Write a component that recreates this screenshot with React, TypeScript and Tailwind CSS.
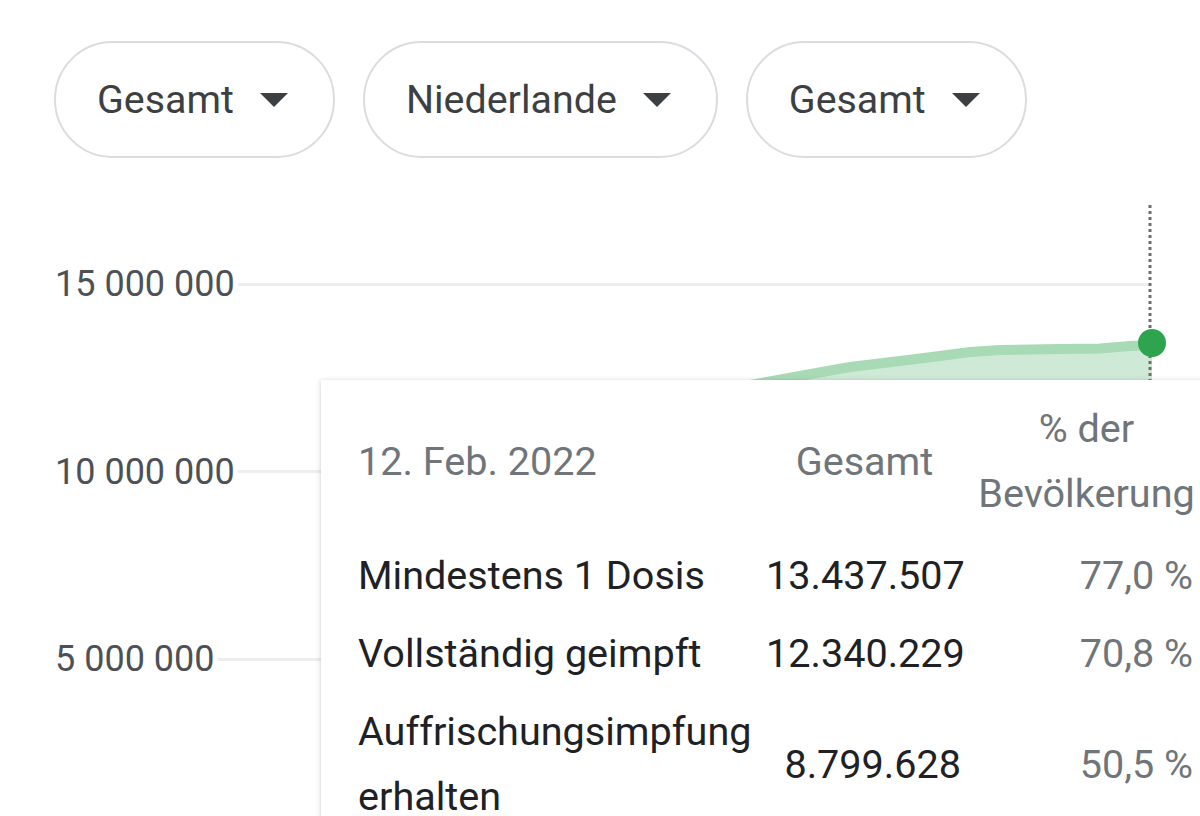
const pills = ['Gesamt', 'Niederlande', 'Gesamt']

const yTicks = ['15 000 000', '10 000 000', '5 000 000']

const rows = [
  { label: ['Mindestens 1 Dosis'], total: '13.437.507', pct: '77,0 %' },
  { label: ['Vollständig geimpft'], total: '12.340.229', pct: '70,8 %' },
  { label: ['Auffrischungsimpfung', 'erhalten'], total: '8.799.628', pct: '50,5 %' },
]

// top edge of the series, in page pixels
const curve: [number, number][] = [
  [560, 440],
  [650, 410],
  [745, 381],
  [800, 371],
  [850, 362],
  [900, 356],
  [940, 351],
  [970, 347],
  [1000, 345],
  [1060, 344],
  [1100, 343.5],
  [1130, 341],
  [1152, 340],
]

function Caret() {
  return (
    <svg width="28" height="14" viewBox="0 0 28 14" className="shrink-0">
      <polygon points="0,0 28,0 14,14" fill="#3c4043" />
    </svg>
  )
}

function Chart() {
  const line = curve.map(([x, y]) => `${x},${y + 5}`).join(' ')
  const area =
    curve.map(([x, y], i) => `${i === 0 ? 'M' : 'L'}${x} ${y + 5}`).join(' ') +
    ' L1152 816 L560 816 Z'
  return (
    <svg
      width="1200"
      height="816"
      viewBox="0 0 1200 816"
      className="pointer-events-none absolute left-0 top-0"
    >
      <path d={area} fill="#ceead6" />
      <polyline points={line} fill="none" stroke="#a8dab5" strokeWidth="10" strokeLinejoin="round" />
      <line x1="1150" y1="205" x2="1150" y2="816" stroke="#6f6f6f" strokeWidth="3" strokeDasharray="3 3" />
      <circle cx="1152" cy="343" r="14" fill="#2fa44f" />
    </svg>
  )
}

export default function App() {
  return (
    <div className="relative h-[816px] w-[1200px] overflow-hidden bg-white font-[Roboto,sans-serif]">
      <div className="flex gap-[28px] pl-[54px] pt-[41px]">
        {pills.map((p, i) => (
          <div
            key={i}
            className="flex h-[117px] items-center gap-[26px] rounded-full border-2 border-[#dadce0] pl-[41px] pr-[45px] text-[39.4px] text-[#3c4043]"
          >
            <span>{p}</span>
            <Caret />
          </div>
        ))}
      </div>

      <div className="mt-[32.5px] flex flex-col pl-[55px] pr-[50px]">
        {yTicks.map((t) => (
          <div key={t} className="flex h-[187.5px] items-center gap-[3px]">
            <span className="text-[36px] leading-none text-[#4d5156]">{t}</span>
            <div className="h-[3px] flex-1 bg-[#eeeeee]" />
          </div>
        ))}
      </div>

      <Chart />

      <div className="absolute left-[321px] top-[380px] h-[600px] w-[920px] bg-white pl-[37px] pt-[16px] shadow-[0_1px_5px_rgba(60,64,67,0.28)]">
        <div className="grid grid-cols-[393px_197px_217px] items-center gap-x-[15px] gap-y-[13px] text-[39.6px] leading-[65px]">
          <div className="text-[#70757a]">12. Feb. 2022</div>
          <div className="text-center text-[#70757a]">Gesamt</div>
          <div className="text-center text-[#70757a]">
            % der
            <br />
            Bevölkerung
          </div>
          {rows.map((r) => (
            <div key={r.total} className="contents">
              <div className={r === rows[0] ? 'mt-[4px] text-[#202124]' : 'text-[#202124]'}>
                {r.label.map((l, i) => (
                  <div key={i}>{l}</div>
                ))}
              </div>
              <div className={r === rows[0] ? 'mt-[4px] pr-[2px] text-right text-[#202124]' : 'pr-[2px] text-right text-[#202124]'}>
                {r.total}
              </div>
              <div className={r === rows[0] ? 'mt-[4px] pr-[2px] text-right text-[#70757a]' : 'pr-[2px] text-right text-[#70757a]'}>
                {r.pct}
              </div>
            </div>
          ))}
        </div>
      </div>
    </div>
  )
}
